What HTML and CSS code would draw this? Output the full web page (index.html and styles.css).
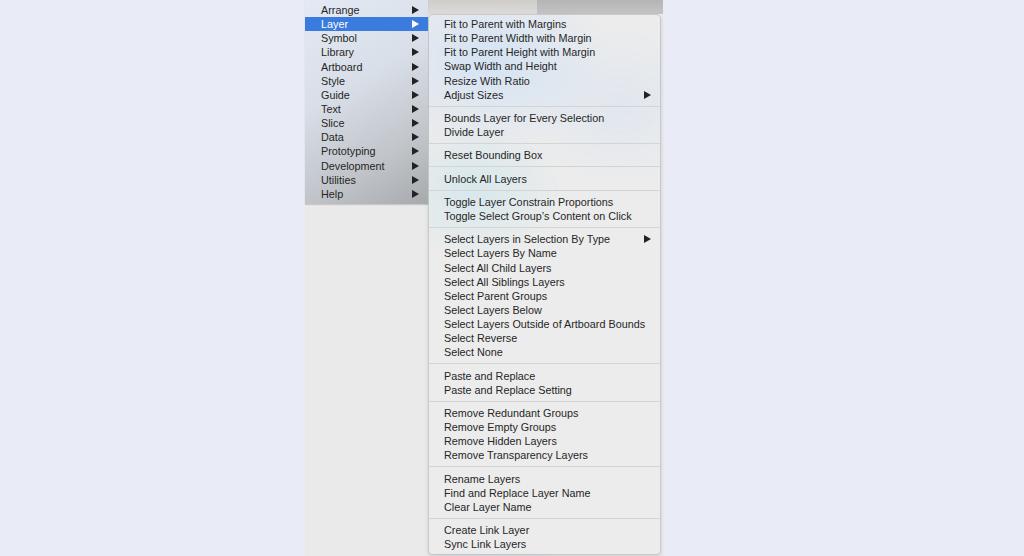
FILE: index.html
```html
<!DOCTYPE html>
<html lang="en">
<head>
    <meta charset="UTF-8">
    <title>Layer menu</title>
    <link rel="stylesheet" href="styles.css">
</head>
<body>

<div class="screen">
    <!-- main plugin menu -->
    <ul class="menu main-menu">
        <li class="item has-sub">Arrange<span class="arrow"></span></li>
        <li class="item has-sub active">Layer<span class="arrow"></span></li>
        <li class="item has-sub">Symbol<span class="arrow"></span></li>
        <li class="item has-sub">Library<span class="arrow"></span></li>
        <li class="item has-sub">Artboard<span class="arrow"></span></li>
        <li class="item has-sub">Style<span class="arrow"></span></li>
        <li class="item has-sub">Guide<span class="arrow"></span></li>
        <li class="item has-sub">Text<span class="arrow"></span></li>
        <li class="item has-sub">Slice<span class="arrow"></span></li>
        <li class="item has-sub">Data<span class="arrow"></span></li>
        <li class="item has-sub">Prototyping<span class="arrow"></span></li>
        <li class="item has-sub">Development<span class="arrow"></span></li>
        <li class="item has-sub">Utilities<span class="arrow"></span></li>
        <li class="item has-sub">Help<span class="arrow"></span></li>
    </ul>

    <div class="sub-col">
        <div class="toolbar">
            <div class="toolbar-left"></div>
            <div class="toolbar-right"></div>
        </div>

        <ul class="menu sub-menu">
            <li class="item">Fit to Parent with Margins</li>
            <li class="item">Fit to Parent Width with Margin</li>
            <li class="item">Fit to Parent Height with Margin</li>
            <li class="item">Swap Width and Height</li>
            <li class="item">Resize With Ratio</li>
            <li class="item has-sub">Adjust Sizes<span class="arrow"></span></li>
            <li class="sep"></li>
            <li class="item">Bounds Layer for Every Selection</li>
            <li class="item">Divide Layer</li>
            <li class="sep"></li>
            <li class="item">Reset Bounding Box</li>
            <li class="sep"></li>
            <li class="item">Unlock All Layers</li>
            <li class="sep"></li>
            <li class="item">Toggle Layer Constrain Proportions</li>
            <li class="item">Toggle Select Group’s Content on Click</li>
            <li class="sep"></li>
            <li class="item has-sub">Select Layers in Selection By Type<span class="arrow"></span></li>
            <li class="item">Select Layers By Name</li>
            <li class="item">Select All Child Layers</li>
            <li class="item">Select All Siblings Layers</li>
            <li class="item">Select Parent Groups</li>
            <li class="item">Select Layers Below</li>
            <li class="item">Select Layers Outside of Artboard Bounds</li>
            <li class="item">Select Reverse</li>
            <li class="item">Select None</li>
            <li class="sep"></li>
            <li class="item">Paste and Replace</li>
            <li class="item">Paste and Replace Setting</li>
            <li class="sep"></li>
            <li class="item">Remove Redundant Groups</li>
            <li class="item">Remove Empty Groups</li>
            <li class="item">Remove Hidden Layers</li>
            <li class="item">Remove Transparency Layers</li>
            <li class="sep"></li>
            <li class="item">Rename Layers</li>
            <li class="item">Find and Replace Layer Name</li>
            <li class="item">Clear Layer Name</li>
            <li class="sep"></li>
            <li class="item">Create Link Layer</li>
            <li class="item">Sync Link Layers</li>
        </ul>
    </div>
</div>

</body>
</html>
```

FILE: styles.css
```css
* { margin: 0; padding: 0; box-sizing: border-box; }
body { font-family: 'Liberation Sans', Arial, sans-serif; font-size: 10.8px; color: #262626; background-color: #e9ebf6; height: 556px; overflow: hidden; }

/* grey app window behind the menus */
.screen {
    display: flex;
    align-items: flex-start;
    width: 358px;
    height: 556px;
    margin-left: 305px;
    background-color: #eaeaea;
}

.menu { list-style: none; }
.item {
    display: flex;
    align-items: center;
    justify-content: space-between;
    height: 14.15px;
    white-space: nowrap;
}
.arrow {
    width: 0;
    height: 0;
    border-left: 7px solid #222;
    border-top: 4px solid transparent;
    border-bottom: 4px solid transparent;
}

/* Main menu */
.main-menu {
    width: 123px;
    flex-shrink: 0;
    padding: 3px 0;
    background: linear-gradient(150deg, #e3eaf5 0%, #d9dfe8 40%, #c0c4c9 75%, #a6aaad 100%);
    box-shadow: 0 1px 1px rgba(0, 0, 0, 0.15);
    position: relative;
    z-index: 1;
}
.main-menu .item { padding: 0 9px 0 16px; }
.main-menu .item.active { background-color: #3a7bdd; color: #fff; }
.main-menu .item.active .arrow { border-left-color: #fff; }

/* Submenu column */
.sub-col { flex: 1; display: flex; flex-direction: column; }
.toolbar { display: flex; height: 14px; }
.toolbar-left { width: 109px; background: linear-gradient(#cfcdca, #dcdbd9); }
.toolbar-right { flex: 1; background: linear-gradient(#b4b4b4, #c4c4c4); }

.sub-menu {
    width: 233px;
    padding: 2px 0 3px;
    border: 1px solid rgba(0, 0, 0, 0.14);
    border-radius: 5px;
    background:
        radial-gradient(ellipse 120px 90px at 60px 45px, rgba(204, 224, 246, 0.75), transparent),
        radial-gradient(ellipse 90px 70px at 45px 175px, rgba(206, 230, 236, 0.7), transparent),
        radial-gradient(ellipse 110px 80px at 190px 90px, rgba(214, 226, 242, 0.5), transparent),
        #ececec;
    box-shadow: 0 2px 4px rgba(0, 0, 0, 0.12);
}
.sub-menu .item { padding: 0 9px 0 15px; }
.sep { height: 1px; margin: 4px 0 4.1px; background-color: #d4d4d4; }
```
